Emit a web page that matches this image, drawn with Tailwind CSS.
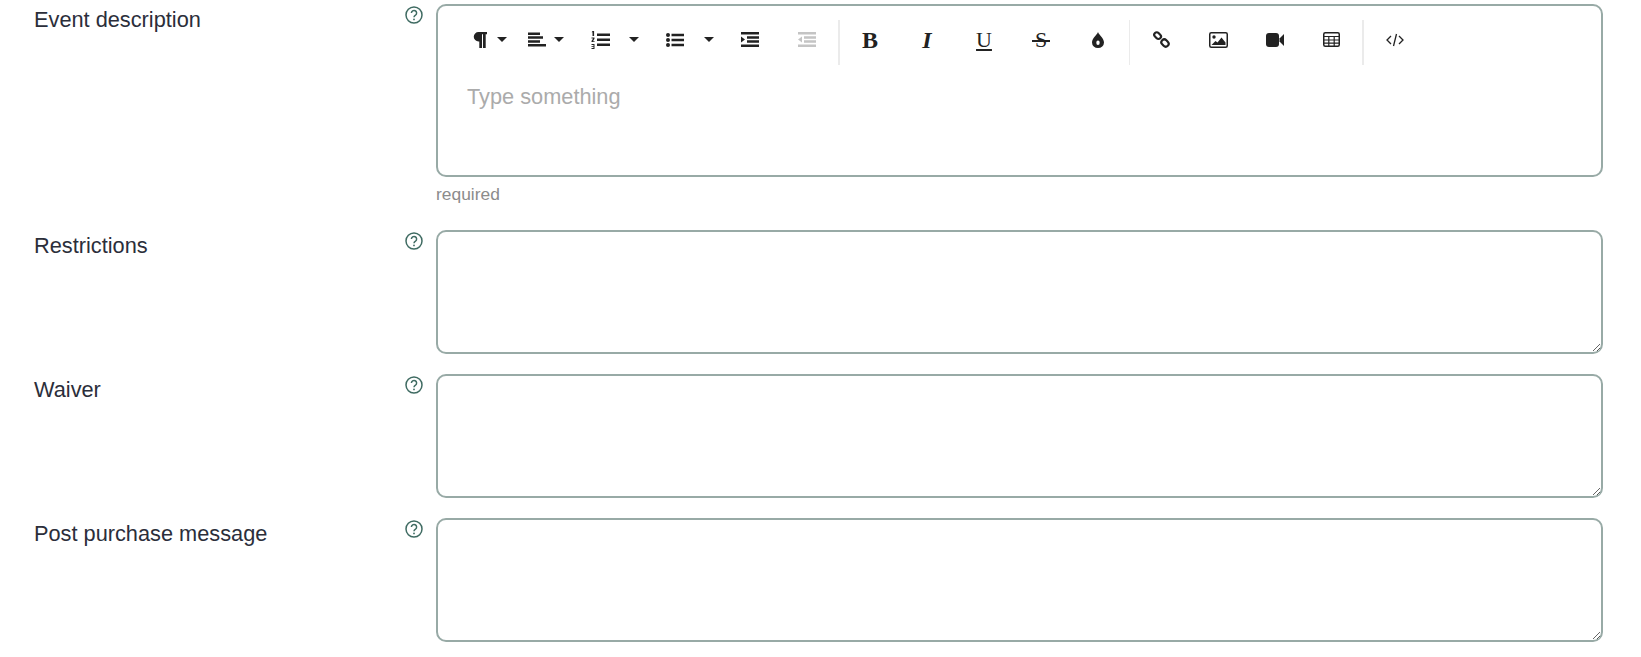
<!DOCTYPE html>
<html lang="en">
<head>
  <meta charset="UTF-8" />
  <title>Event form</title>
  <script src="https://cdn.jsdelivr.net/npm/@tailwindcss/browser@4"></script>
</head>
<body class="bg-white font-['Liberation_Sans',Arial,sans-serif] overflow-hidden">
  <div class="w-[1641px] h-[657px] overflow-hidden pt-[4px]">

    <!-- Event description -->
    <div class="flex">
      <label class="w-[405px] pl-[34px] pt-[1px] text-[21.76px] leading-[30px] text-[#2b2e3a]">Event description</label>
      <div class="w-[31px] pt-[2px]">
        <svg class="w-[18px] h-[18px]" viewBox="0 0 18 18" fill="none" stroke="#3f6b62"><circle cx="9" cy="9" r="8" stroke-width="1.5"/><path d="M6.4 7.1a2.6 2.6 0 1 1 4.1 2.1c-.9.6-1.5 1-1.5 2" stroke-width="1.5"/><circle cx="9" cy="13.4" r=".9" fill="#3f6b62" stroke="none"/></svg>
      </div>
      <div class="w-[1167px]">
        <div class="h-[173px] border-2 border-[#98aaa6] rounded-[10px]">
          <!-- Toolbar -->
          <div class="flex items-center h-[45px] pb-[6px] mt-[14px] text-[#222222]">
            <span class="w-[22px] ml-[31px] flex justify-center"><svg class="w-[14px] h-[16px]" viewBox="0 0 14 16" fill="#222"><path d="M5.5 0H14v2.200h-1.300V16h-2.700V2.200H9V16H6.300V9.500h-.8A4.750 4.750 0 0 1 5.500 0z"/></svg></span>
            <span class="w-[22px] flex justify-center"><span class="border-x-[5.5px] border-t-[5.5px] border-x-transparent border-t-[#222]"></span></span>

            <span class="w-[22px] ml-[13px] flex justify-center"><svg class="w-[18px] h-[15px]" viewBox="0 0 18 14" fill="#222"><path d="M0 0h12v2.500H0zM0 3.800h15v2.500H0zM0 7.700h12v2.500H0zM0 11.500h18V14H0z"/></svg></span>
            <span class="w-[22px] flex justify-center"><span class="border-x-[5.5px] border-t-[5.5px] border-x-transparent border-t-[#222]"></span></span>

            <span class="w-[22px] ml-[19px] flex justify-center"><svg class="w-[19px] h-[18px]" viewBox="0 0 19 18" fill="#222"><path d="M6 2.500h13V5H6zM6 7.500h13V10H6zM6 12.500h13V15H6zM1.500 0h1.600v5H1.500V1.200H.6zM.5 6.600h3v1.200L2 10.200h1.600V11H.5v-.9L2.100 7.500H.5zM.5 13h3v5h-3v-.9h2v-1.100h-2v-.8h2v-1.300h-2z"/></svg></span>
            <span class="w-[22px] ml-[12px] flex justify-center"><span class="border-x-[5.5px] border-t-[5.5px] border-x-transparent border-t-[#222]"></span></span>

            <span class="w-[22px] ml-[19px] flex justify-center"><svg class="w-[18px] h-[14px]" viewBox="0 0 18 14" fill="#222"><circle cx="2" cy="2" r="2"/><circle cx="2" cy="7" r="2"/><circle cx="2" cy="12" r="2"/><path d="M5.500.8h12.500v2.500H5.500zM5.500 5.800h12.500v2.500H5.500zM5.500 10.800h12.500v2.500H5.500z"/></svg></span>
            <span class="w-[22px] ml-[12px] flex justify-center"><span class="border-x-[5.5px] border-t-[5.5px] border-x-transparent border-t-[#222]"></span></span>

            <span class="w-[22px] ml-[19px] flex justify-center"><svg class="w-[18px] h-[15px]" viewBox="0 0 18 15" fill="#222"><path d="M0 0h18v2.500H0zM0 12.500h18V15H0zM6 4.200h12v2.500H6zM6 8.300h12v2.500H6zM0 4.500l4 3-4 3z"/></svg></span>
            <span class="w-[22px] ml-[35px] flex justify-center"><svg class="w-[18px] h-[15px]" viewBox="0 0 18 15" fill="#c4c4c4"><path d="M0 0h18v2.500H0zM0 12.500h18V15H0zM6 4.200h12v2.500H6zM6 8.300h12v2.500H6zM4 4.500 0 7.500l4 3z"/></svg></span>

            <span class="self-start w-[2px] h-[45px] ml-[20px] bg-[#ebebeb]"></span>

            <span class="w-[22px] ml-[19px] flex justify-center font-['Liberation_Serif',serif] font-bold text-[24px] leading-none">B</span>
            <span class="w-[22px] ml-[35px] flex justify-center font-['Liberation_Serif',serif] font-bold italic text-[24px] leading-none">I</span>
            <span class="w-[22px] ml-[35px] flex justify-center font-['Liberation_Serif',serif] underline text-[22px] leading-none">U</span>
            <span class="relative w-[22px] ml-[35px] flex justify-center font-['Liberation_Serif',serif] text-[22px] leading-none">S<span class="absolute left-[2px] right-[2px] top-[11px] h-[2px] bg-[#222]"></span></span>
            <span class="w-[22px] ml-[35px] flex justify-center"><svg class="w-[12px] h-[16px]" viewBox="0 0 12 16"><path fill="#222" fill-rule="evenodd" d="M6 0c1 3 6 6 6 10.500A6 5.500 0 0 1 0 10.500C0 6 5 3 6 0zm0 8.500a1.700 2.300 0 1 0 0 4.600 1.700 2.300 0 0 0 0-4.600z"/></svg></span>

            <span class="self-start w-[1px] h-[45px] ml-[20px] bg-[#ebebeb]"></span>

            <span class="w-[22px] ml-[20px] flex justify-center"><svg class="w-[17px] h-[17px]" viewBox="0 0 17 17" fill="none" stroke="#222" stroke-width="2.200"><rect x="-3.700" y="-2.500" width="7.400" height="5" rx="2.500" transform="translate(4.600 4.600) rotate(45)"/><rect x="-3.900" y="-2.900" width="7.800" height="5.800" rx="2.900" transform="translate(12 12) rotate(45)"/></svg></span>
            <span class="w-[22px] ml-[35px] flex justify-center"><svg class="w-[19px] h-[16px]" viewBox="0 0 19 16"><rect x=".75" y=".75" width="17.500" height="14.500" rx="1.500" fill="#fff" stroke="#222" stroke-width="1.500"/><circle cx="5" cy="5" r="1.700" fill="#222"/><path fill="#222" d="M2.500 13l4-4 2 1.500 4-5 4 5V13z"/></svg></span>
            <span class="w-[22px] ml-[35px] flex justify-center"><svg class="w-[18px] h-[14px]" viewBox="0 0 18 14" fill="#222"><rect width="13" height="14" rx="3"/><path d="M13.500 5.500 18 1v12l-4.500-4.500z"/></svg></span>
            <span class="w-[22px] ml-[34px] flex justify-center"><svg class="w-[17px] h-[15px]" viewBox="0 0 17 15" fill="none" stroke="#222"><rect x=".75" y=".75" width="15.500" height="13.500" rx="1.500" stroke-width="1.500"/><path d="M.5 4.500h16M.5 8h16M.5 11.200h16M5.800 4v10M11.200 4v10" stroke-width="1.200"/></svg></span>

            <span class="self-start w-[2px] h-[45px] ml-[20px] bg-[#ebebeb]"></span>

            <span class="w-[22px] ml-[20px] flex justify-center"><svg class="w-[18px] h-[14px]" viewBox="0 0 18 14" fill="none" stroke="#222" stroke-width="1.300"><path d="M5 3 1 7l4 4M13 3l4 4-4 4M10.500 1l-3 12"/></svg></span>
          </div>
          <!-- Editor placeholder -->
          <div class="pl-[29px] pt-[17px] text-[21.76px] leading-[30px] text-[#ababab]">Type something</div>
        </div>
        <p class="mt-[6px] text-[17.4px] leading-[22px] text-[#8c8c8c]">required</p>
      </div>
    </div>

    <!-- Restrictions -->
    <div class="flex mt-[25px]">
      <label class="w-[405px] pl-[34px] pt-[1px] text-[21.76px] leading-[30px] text-[#2b2e3a]">Restrictions</label>
      <div class="w-[31px] pt-[2px]">
        <svg class="w-[18px] h-[18px]" viewBox="0 0 18 18" fill="none" stroke="#3f6b62"><circle cx="9" cy="9" r="8" stroke-width="1.5"/><path d="M6.4 7.1a2.6 2.6 0 1 1 4.1 2.1c-.9.6-1.5 1-1.5 2" stroke-width="1.5"/><circle cx="9" cy="13.4" r=".9" fill="#3f6b62" stroke="none"/></svg>
      </div>
      <textarea class="block w-[1167px] h-[124px] border-2 border-[#98aaa6] rounded-[10px] outline-none"></textarea>
    </div>

    <!-- Waiver -->
    <div class="flex mt-[20px]">
      <label class="w-[405px] pl-[34px] pt-[1px] text-[21.76px] leading-[30px] text-[#2b2e3a]">Waiver</label>
      <div class="w-[31px] pt-[2px]">
        <svg class="w-[18px] h-[18px]" viewBox="0 0 18 18" fill="none" stroke="#3f6b62"><circle cx="9" cy="9" r="8" stroke-width="1.5"/><path d="M6.4 7.1a2.6 2.6 0 1 1 4.1 2.1c-.9.6-1.5 1-1.5 2" stroke-width="1.5"/><circle cx="9" cy="13.4" r=".9" fill="#3f6b62" stroke="none"/></svg>
      </div>
      <textarea class="block w-[1167px] h-[124px] border-2 border-[#98aaa6] rounded-[10px] outline-none"></textarea>
    </div>

    <!-- Post purchase message -->
    <div class="flex mt-[20px]">
      <label class="w-[405px] pl-[34px] pt-[1px] text-[21.76px] leading-[30px] text-[#2b2e3a]">Post purchase message</label>
      <div class="w-[31px] pt-[2px]">
        <svg class="w-[18px] h-[18px]" viewBox="0 0 18 18" fill="none" stroke="#3f6b62"><circle cx="9" cy="9" r="8" stroke-width="1.5"/><path d="M6.4 7.1a2.6 2.6 0 1 1 4.1 2.1c-.9.6-1.5 1-1.5 2" stroke-width="1.5"/><circle cx="9" cy="13.4" r=".9" fill="#3f6b62" stroke="none"/></svg>
      </div>
      <textarea class="block w-[1167px] h-[124px] border-2 border-[#98aaa6] rounded-[10px] outline-none"></textarea>
    </div>
  </div>
</body>
</html>
